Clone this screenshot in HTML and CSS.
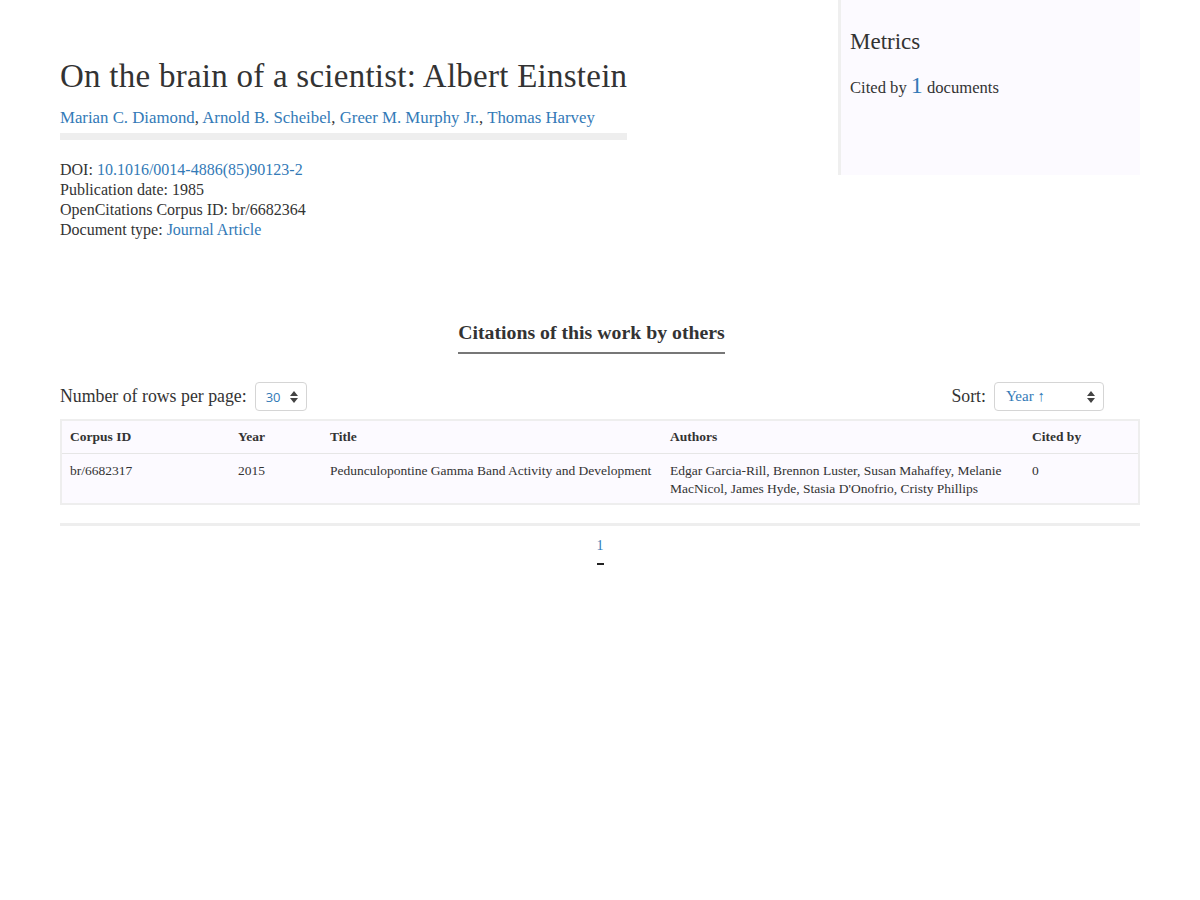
FILE: index.html
```html
<html>

<head>
	<title>On the brain of a scientist: Albert Einstein</title>
	<link rel="stylesheet" href="styles.css">
</head>
<body>
	<div class="page">
		<div class="top">
			<div class="info">
				<div class="head">
					<h1>On the brain of a scientist: Albert Einstein</h1>
					<p class="authors">
						<a href="#">Marian C. Diamond</a>, <a href="#">Arnold B. Scheibel</a>, <a href="#">Greer M. Murphy Jr.</a>, <a href="#">Thomas Harvey</a>
					</p>
				</div>
				<div class="meta">
					<div>DOI: <a href="#">10.1016/0014-4886(85)90123-2</a></div>
					<div>Publication date: 1985</div>
					<div>OpenCitations Corpus ID: br/6682364</div>
					<div>Document type: <a href="#">Journal Article</a></div>
				</div>
			</div>
			<div class="metrics">
				<h3>Metrics</h3>
				<p>Cited by <span class="count">1</span> documents</p>
			</div>
		</div>

		<div class="citations">
			<h2><span>Citations of this work by others</span></h2>
			<div class="controls">
				<div class="ctrl">
					<label>Number of rows per page:</label>
					<div class="select rows">
						<span>30</span>
						<svg width="8" height="12" viewBox="0 0 8 12"><path d="M4 0L8 5H0Z M4 12L0 7H8Z" fill="#444"/></svg>
					</div>
				</div>
				<div class="ctrl">
					<label>Sort:</label>
					<div class="select sort">
						<span>Year &#8593;</span>
						<svg width="8" height="12" viewBox="0 0 8 12"><path d="M4 0L8 5H0Z M4 12L0 7H8Z" fill="#444"/></svg>
					</div>
				</div>
			</div>
			<table class="results">
				<thead>
					<tr>
						<th class="c-id">Corpus ID</th>
						<th class="c-year">Year</th>
						<th class="c-title">Title</th>
						<th class="c-auth">Authors</th>
						<th class="c-cited">Cited by</th>
					</tr>
				</thead>
				<tbody>
					<tr>
						<td>br/6682317</td>
						<td>2015</td>
						<td>Pedunculopontine Gamma Band Activity and Development</td>
						<td>Edgar Garcia-Rill, Brennon Luster, Susan Mahaffey, Melanie MacNicol, James Hyde, Stasia D'Onofrio, Cristy Phillips</td>
						<td>0</td>
					</tr>
				</tbody>
			</table>
			<div class="pager">
				<a href="#" class="current">1</a>
			</div>
		</div>
	</div>
</body>

</html>
```

FILE: styles.css
```css
body { margin: 0; font-family: "Liberation Serif", serif; color: #333; font-size: 16px; }
a { color: #337ab7; text-decoration: none; }
.page { width: 1080px; margin: 0 auto; }
.top { display: flex; justify-content: space-between; }
.info { padding-top: 56px; }
.head { display: inline-block; border-bottom: 7px solid #eee; padding-bottom: 4px; }
h1 { font-weight: normal; font-size: 33px; letter-spacing: 0.25px; margin: 0; line-height: 40px; }
.authors { margin: 11px 0 0; font-size: 16.8px; line-height: 22px; }
.meta { margin-top: 20px; font-size: 16px; line-height: 20px; }
.metrics { width: 302px; height: 175px; box-sizing: border-box; background: #fcfaff; border-left: 3px solid #efefef; padding: 28px 9px; }
.metrics h3 { font-weight: normal; font-size: 23px; margin: 0; line-height: 28px; }
.metrics p { margin: 16px 0 0; font-size: 16.6px; }
.metrics .count { font-size: 24px; color: #337ab7; }
.citations { margin-top: 80px; }
h2 { text-align: center; margin: 0; font-size: 19.8px; padding-right: 17px; }
h2 span { display: inline-block; border-bottom: 2px solid #777; padding-bottom: 8px; line-height: 24px; }
.controls { display: flex; justify-content: space-between; align-items: center; margin-top: 28px; padding-right: 36px; }
.ctrl { display: flex; align-items: center; gap: 8px; font-size: 17.8px; }
.select { display: flex; align-items: center; justify-content: space-between; height: 29px; box-sizing: border-box; border: 1px solid #d5d5d5; border-radius: 4px; color: #337ab7; }
.select.rows { width: 52px; padding: 0 8px 0 10px; font-family: "Open Sans", sans-serif; font-size: 13px; }
.select.sort { width: 110px; padding: 0 8px 0 11px; font-size: 15px; }
.results { width: 100%; margin-top: 8px; border-collapse: collapse; border: 2px solid #eee; background: #fcfaff; font-size: 13.5px; table-layout: fixed; }
.results th { text-align: left; padding: 8px 8px; line-height: 16px; border-bottom: 1px solid #e6e6e6; }
.results td { vertical-align: top; padding: 8px 8px 5px; line-height: 18px; }
.c-id { width: 152px; }
.c-year { width: 76px; }
.c-title { width: 324px; }
.c-auth { width: 346px; }
.pager { border-top: 3px solid #eee; margin-top: 18px; text-align: center; padding-top: 12px; }
.pager a { display: inline-block; font-size: 14px; padding-bottom: 9px; border-bottom: 2px solid #222; line-height: 16px; }
```
